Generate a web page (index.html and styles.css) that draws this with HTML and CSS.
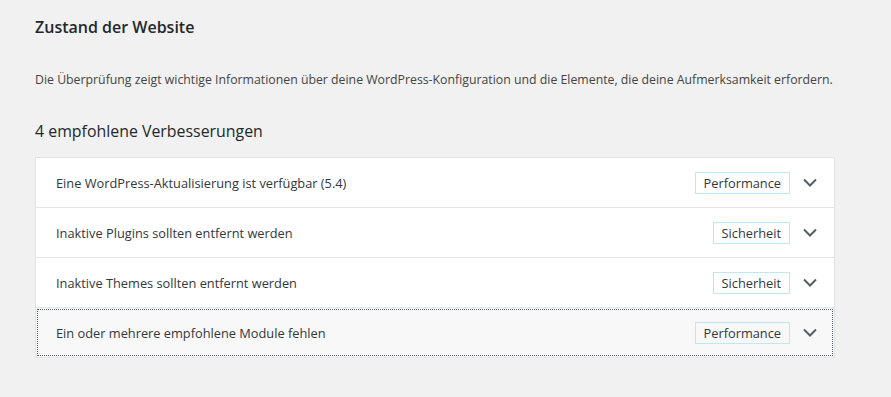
FILE: index.html
```html
<!DOCTYPE html>
<html lang="de">
<head>
  <meta charset="UTF-8" />
  <title>Zustand der Website</title>
  <link rel="stylesheet" href="styles.css">
</head>
<body>
  <div class="wrap">
    <h1>Zustand der Website</h1>
    <p class="intro">Die Überprüfung zeigt wichtige Informationen über deine WordPress-Konfiguration und die Elemente, die deine Aufmerksamkeit erfordern.</p>
    <h3>4 empfohlene Verbesserungen</h3>

    <div class="accordion">
      <div class="accordion-heading">
        <button class="trigger">
          <span class="title">Eine WordPress-Aktualisierung ist verfügbar (5.4)</span>
          <span class="badge">Performance</span>
          <svg class="icon" width="14" height="9" viewBox="0 0 14 9"><path d="M1 1.5l6 6 6-6" fill="none" stroke="#555d66" stroke-width="2"/></svg>
        </button>
      </div>
      <div class="accordion-heading">
        <button class="trigger">
          <span class="title">Inaktive Plugins sollten entfernt werden</span>
          <span class="badge">Sicherheit</span>
          <svg class="icon" width="14" height="9" viewBox="0 0 14 9"><path d="M1 1.5l6 6 6-6" fill="none" stroke="#555d66" stroke-width="2"/></svg>
        </button>
      </div>
      <div class="accordion-heading">
        <button class="trigger">
          <span class="title">Inaktive Themes sollten entfernt werden</span>
          <span class="badge">Sicherheit</span>
          <svg class="icon" width="14" height="9" viewBox="0 0 14 9"><path d="M1 1.5l6 6 6-6" fill="none" stroke="#555d66" stroke-width="2"/></svg>
        </button>
      </div>
      <div class="accordion-heading">
        <button class="trigger focused">
          <span class="title">Ein oder mehrere empfohlene Module fehlen</span>
          <span class="badge">Performance</span>
          <svg class="icon" width="14" height="9" viewBox="0 0 14 9"><path d="M1 1.5l6 6 6-6" fill="none" stroke="#555d66" stroke-width="2"/></svg>
        </button>
      </div>
    </div>
  </div>
</body>
</html>
```

FILE: styles.css
```css
* { margin: 0; padding: 0; box-sizing: border-box; }

body {
  background: #f1f1f1;
  font-family: 'Open Sans', sans-serif;
  color: #444;
  font-size: 12.3px;
}

.wrap {
  width: 800px;
  margin-left: 35px;
  padding-top: 16px;
}

h1 {
  font-size: 16px;
  font-weight: 600;
  color: #23282d;
  line-height: 22px;
}

.intro {
  margin-top: 33px;
  line-height: 18px;
  color: #444;
}

h3 {
  margin-top: 31px;
  font-size: 15.9px;
  font-weight: 400;
  color: #23282d;
  line-height: 22px;
}

/* ACCORDION */
.accordion {
  margin-top: 15px;
  border: 1px solid #e2e4e7;
  background: #fff;
}

.accordion-heading {
  border-top: 1px solid #e2e4e7;
}

.accordion-heading:first-child {
  border-top: none;
}

.trigger {
  display: flex;
  align-items: center;
  width: 100%;
  min-height: 49px;
  padding: 0 17px 0 20px;
  background: #fff;
  border: none;
  font: inherit;
  font-size: 12.8px;
  color: #32373c;
  text-align: left;
  cursor: pointer;
}

.trigger.focused {
  background: #f8f8f8;
  outline: 1px dotted #555d66;
  outline-offset: -2px;
}

.title {
  flex: 1;
}

.badge {
  height: 22px;
  line-height: 20px;
  padding: 0 8px;
  border: 1px solid #bfe7f3;
  color: #32373c;
}

.icon {
  margin-left: 13px;
}
```
